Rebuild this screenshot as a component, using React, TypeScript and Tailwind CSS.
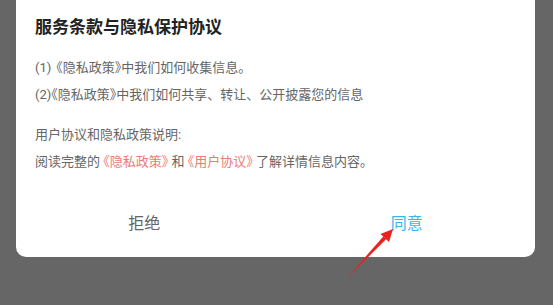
import React from "react";

function H({ children }: { children: React.ReactNode }) {
  return <span className="[font-feature-settings:'halt']">{children}</span>;
}

export default function App() {
  const font = { fontFamily: 'Roboto, "Noto Sans CJK SC", sans-serif' };
  return (
    <div
      className="relative w-[553px] h-[305px] overflow-hidden bg-[#666666]"
      style={font}
    >
      <div className="ml-[16px] w-[519px] bg-white rounded-b-[10px] flex flex-col">
        <div className="pl-[19px] pt-[17px] text-[17px] leading-[20px] font-bold text-[#222222]">
          服务条款与隐私保护协议
        </div>
        <div className="pl-[19px] mt-[17px] text-[13px] leading-[27px] text-[#666666]">
          <div>
            (1)<span className="ml-[5px]"><H>《</H></span>隐私政策<H>》</H>中我们如何收集信息。
          </div>
          <div>
            (2)<H>《</H>隐私政策<H>》</H>中我们如何共享、转让、公开披露您的信息
          </div>
          <div className="mt-[13px]">用户协议和隐私政策说明:</div>
          <div>
            阅读完整的
            <span className="text-[#ec7b74]">
              {" "}
              <H>《</H>隐私政策<H>》</H>{" "}
            </span>
            和
            <span className="text-[#ec7b74]">
              {" "}
              <H>《</H>用户协议<H>》</H>{" "}
            </span>
            了解详情信息内容。
          </div>
        </div>
        <div className="mt-[15px] h-[67px] flex items-center text-[16px]">
          <div className="flex-1 text-center text-[#666666]">拒绝</div>
          <div className="flex-1 text-center text-[#38b6ec] pl-[6px]">同意</div>
        </div>
      </div>
      <svg
        className="absolute left-0 top-0"
        width="553"
        height="305"
        viewBox="0 0 553 305"
      >
        <polygon points="347,278 386.3,239.1 383.3,236.4" fill="#e8231f" />
        <polygon points="393,229 389,242 380.5,234" fill="#e8231f" />
      </svg>
    </div>
  );
}
